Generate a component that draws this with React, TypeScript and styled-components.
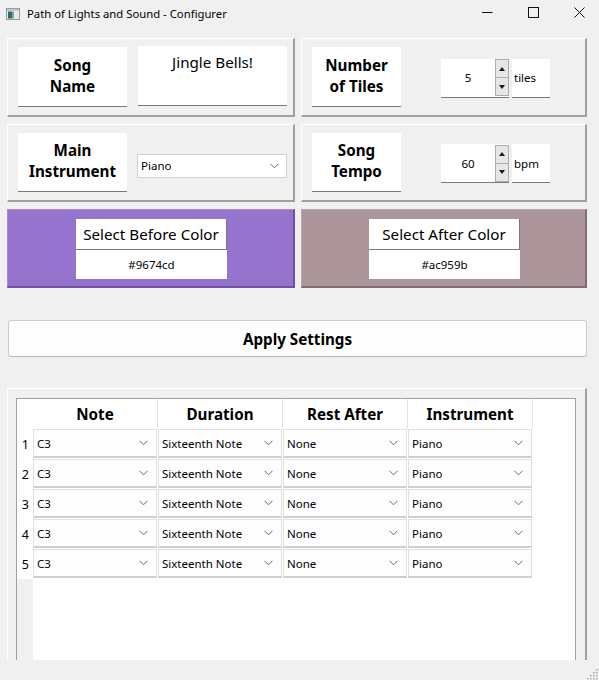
import React from 'react';
import styled, { createGlobalStyle } from 'styled-components';

const GlobalStyle = createGlobalStyle`
  html, body {
    margin: 0;
    padding: 0;
    background: #f0f0f0;
  }
  body {
    font-family: "Segoe UI", "Noto Sans", "Open Sans", sans-serif;
    color: #000;
  }
`;

const Window = styled.div`
  width: 599px;
  height: 680px;
  display: flex;
  flex-direction: column;
  overflow: hidden;
  background: #f0f0f0;
`;

const TitleBar = styled.div`
  height: 28px;
  flex-shrink: 0;
  display: flex;
  align-items: center;
  padding-left: 6px;
  font-size: 11.3px;
`;

const TitleText = styled.span`
  margin-left: 7px;
  flex: 1;
  margin-top: -2px;
`;

const WindowButtons = styled.div`
  display: flex;
  margin-right: -3px;
  height: 28px;
`;

const WindowButton = styled.div`
  width: 46px;
  display: flex;
  align-items: center;
  justify-content: center;
  margin-top: -4px;
`;

const Content = styled.div`
  flex: 1;
  min-height: 0;
  display: flex;
  flex-direction: column;
  padding: 10px 12px 0 7px;
  overflow: hidden;
`;

const SettingsGrid = styled.div`
  display: grid;
  grid-template-columns: 288px 286px;
  grid-template-rows: 79px 78px 79px;
  column-gap: 6px;
  row-gap: 7px;
`;

const Panel = styled.div<{ $bg?: string; $light?: string; $dark?: string }>`
  box-sizing: border-box;
  background: ${(p) => p.$bg ?? '#f0f0f0'};
  border-style: solid;
  border-width: 1px 2px 2px 1px;
  border-color: ${(p) => p.$light ?? '#ffffff'} ${(p) => p.$dark ?? '#a0a0a0'}
    ${(p) => p.$dark ?? '#a0a0a0'} ${(p) => p.$light ?? '#ffffff'};
  display: flex;
  align-items: center;
  padding-left: 10px;
`;

const LabelBox = styled.div<{ $w: number; $h?: number }>`
  box-sizing: border-box;
  width: ${(p) => p.$w}px;
  height: ${(p) => p.$h ?? 60}px;
  background: #fff;
  border-bottom: 1px solid #7a7a7a;
  display: flex;
  align-items: center;
  justify-content: center;
  text-align: center;
  font-weight: 700;
  font-size: 15.2px;
  line-height: 21px;
  padding-bottom: 2px;
`;

const NameField = styled.div`
  box-sizing: border-box;
  width: 149px;
  height: 60px;
  margin-left: 11px;
  margin-top: -2px;
  background: #fff;
  border-bottom: 1px solid #7a7a7a;
  text-align: center;
  font-size: 15.2px;
  padding-top: 6px;
`;

const SpinGroup = styled.div`
  display: flex;
  margin-left: 40px;
  gap: 3px;
  margin-top: 2px;
`;

const SpinBox = styled.div`
  box-sizing: border-box;
  width: 68px;
  height: 39px;
  background: #fff;
  border-bottom: 1px solid #7a7a7a;
  display: flex;
  align-items: center;
`;

const SpinValue = styled.span`
  flex: 1;
  text-align: center;
  font-size: 11.5px;
`;

const SpinArrows = styled.div`
  width: 14px;
  height: 37px;
  display: flex;
  flex-direction: column;
  border: 1px solid #adadad;
  box-sizing: border-box;
`;

const SpinArrow = styled.div<{ $down?: boolean }>`
  flex: 1;
  background: #e6e6e6;
  display: flex;
  align-items: center;
  justify-content: center;
  border-top: ${(p) => (p.$down ? '1px solid #adadad' : 'none')};
`;

const UnitBox = styled.div`
  box-sizing: border-box;
  width: 38px;
  height: 39px;
  background: #fff;
  border-bottom: 1px solid #7a7a7a;
  display: flex;
  align-items: center;
  padding-left: 2px;
  font-size: 11.5px;
`;

const ComboBox = styled.div<{ $w?: number }>`
  box-sizing: border-box;
  width: ${(p) => (p.$w ? `${p.$w}px` : '100%')};
  height: 24px;
  background: #fff;
  border: 1px solid #d0d0d0;
  display: flex;
  align-items: center;
  justify-content: space-between;
  padding: 0 7px 0 3px;
  font-size: 11.5px;
`;

const MainCombo = styled(ComboBox)`
  margin-left: 10px;
  margin-top: 6px;
`;

const ColorPanel = styled(Panel)`
  flex-direction: column;
  padding: 9px 0 0 2px;
  align-items: center;
  justify-content: flex-start;
`;

const ColorButton = styled.div`
  box-sizing: border-box;
  width: 151px;
  height: 31px;
  background: #fff;
  border-right: 1px solid #7a7a7a;
  border-bottom: 1px solid #7a7a7a;
  display: flex;
  align-items: center;
  justify-content: center;
  font-size: 15.2px;
`;

const HexField = styled.div`
  box-sizing: border-box;
  width: 151px;
  height: 29px;
  background: #fff;
  display: flex;
  align-items: center;
  justify-content: center;
  font-size: 11.5px;
`;

const ApplyButton = styled.button`
  all: unset;
  box-sizing: border-box;
  margin: 32px 0 0 1px;
  width: 579px;
  height: 37px;
  background: #fdfdfd;
  border: 1px solid #cccccc;
  border-bottom-color: #b8b8b8;
  border-radius: 3px;
  display: flex;
  align-items: center;
  justify-content: center;
  font-weight: 700;
  font-size: 15.2px;
`;

const TablePanel = styled.div`
  flex: 1;
  margin-top: 31px;
  min-height: 0;
  display: flex;
  border-style: solid;
  border-width: 1px 2px 0 1px;
  border-color: #fff #a0a0a0 #a0a0a0 #fff;
  padding: 9px 9px 0 8px;
`;

const TableFrame = styled.div`
  flex: 1;
  border: 1px solid #a0a0a0;
  border-bottom: none;
  background: #fff;
  display: grid;
  grid-template-columns: 16px repeat(4, 125px) 1fr;
  grid-template-rows: 30px repeat(5, 30px) 1fr;
`;

const HeaderCell = styled.div`
  border-right: 1px solid #e5e5e5;
  display: flex;
  align-items: center;
  justify-content: center;
  font-weight: 700;
  font-size: 15.2px;
`;

const RowNumber = styled.div`
  display: flex;
  align-items: center;
  justify-content: flex-end;
  padding-right: 4px;
  font-size: 12.5px;
  color: #000;
`;

const Cell = styled.div`
  padding: 0 1px 1px 0;
  box-sizing: border-box;
`;

const CellCombo = styled(ComboBox)`
  height: 29px;
  background: #fdfdfd;
  border-color: #e0e0e0;
  border-bottom: 2px solid #cfcfcf;
  padding: 0 8px 0 3px;
`;

const Filler = styled.div`
  grid-column: 1;
  background: #f0f0f0;
`;

const BottomStrip = styled.div`
  height: 20px;
  flex-shrink: 0;
  display: flex;
  justify-content: flex-end;
  align-items: flex-end;
`;

const Chevron = () => (
  <svg width="9" height="6" viewBox="0 0 9 6">
    <path d="M0.5 0.8 L4.5 4.8 L8.5 0.8" fill="none" stroke="#6a6a6a" strokeWidth="1" />
  </svg>
);

const Triangle = ({ down }: { down?: boolean }) => (
  <svg width="6" height="4" viewBox="0 0 6 4">
    <path d={down ? 'M0 0 L6 0 L3 4 Z' : 'M0 4 L6 4 L3 0 Z'} fill="#1a1a1a" />
  </svg>
);

const AppIcon = () => (
  <svg width="14" height="12" viewBox="0 0 14 12">
    <rect x="0.5" y="0.5" width="13" height="11" fill="#eaeaea" stroke="#9a9a9a" />
    <rect x="1" y="1" width="12" height="2" fill="#bfc8cf" />
    <rect x="2" y="3.5" width="4" height="7" fill="#2e6b6a" />
    <rect x="6" y="3.5" width="2" height="7" fill="#7fa7a8" />
  </svg>
);

const SizeGrip = () => (
  <svg width="12" height="12" viewBox="0 0 12 12">
    {[
      [9, 1],
      [6, 4],
      [9, 4],
      [3, 7],
      [6, 7],
      [9, 7],
      [0, 10],
      [3, 10],
      [6, 10],
      [9, 10],
    ].map(([x, y]) => (
      <rect key={`${x}-${y}`} x={x} y={y} width="1.5" height="1.5" fill="#a8a8a8" />
    ))}
  </svg>
);

function Spin({ value, unit }: { value: string; unit: string }) {
  return (
    <SpinGroup>
      <SpinBox>
        <SpinValue>{value}</SpinValue>
        <SpinArrows>
          <SpinArrow>
            <Triangle />
          </SpinArrow>
          <SpinArrow $down>
            <Triangle down />
          </SpinArrow>
        </SpinArrows>
      </SpinBox>
      <UnitBox>{unit}</UnitBox>
    </SpinGroup>
  );
}

const notes = [1, 2, 3, 4, 5].map((n) => ({
  n,
  note: 'C3',
  duration: 'Sixteenth Note',
  rest: 'None',
  instrument: 'Piano',
}));

export default function App() {
  return (
    <Window>
      <GlobalStyle />
      <TitleBar>
        <AppIcon />
        <TitleText>Path of Lights and Sound - Configurer</TitleText>
        <WindowButtons>
          <WindowButton>
            <svg width="11" height="11" viewBox="0 0 11 11">
              <path d="M0 5.5 H10.5" stroke="#111" strokeWidth="1" />
            </svg>
          </WindowButton>
          <WindowButton>
            <svg width="11" height="11" viewBox="0 0 11 11">
              <rect x="0.5" y="0.5" width="10" height="10" fill="none" stroke="#111" strokeWidth="1" />
            </svg>
          </WindowButton>
          <WindowButton>
            <svg width="11" height="11" viewBox="0 0 11 11">
              <path d="M0.5 0.5 L10.5 10.5 M10.5 0.5 L0.5 10.5" stroke="#111" strokeWidth="1" />
            </svg>
          </WindowButton>
        </WindowButtons>
      </TitleBar>

      <Content>
        <SettingsGrid>
          <Panel>
            <LabelBox $w={109}>
              Song
              <br />
              Name
            </LabelBox>
            <NameField>Jingle Bells!</NameField>
          </Panel>
          <Panel>
            <LabelBox $w={89}>
              Number
              <br />
              of Tiles
            </LabelBox>
            <Spin value="5" unit="tiles" />
          </Panel>
          <Panel>
            <LabelBox $w={109} $h={59}>
              Main
              <br />
              Instrument
            </LabelBox>
            <MainCombo $w={150}>
              <span>Piano</span>
              <Chevron />
            </MainCombo>
          </Panel>
          <Panel>
            <LabelBox $w={89} $h={59}>
              Song
              <br />
              Tempo
            </LabelBox>
            <Spin value="60" unit="bpm" />
          </Panel>
          <ColorPanel $bg="#9674cd" $light="#a98ad8" $dark="#6f53a0">
            <ColorButton>Select Before Color</ColorButton>
            <HexField>#9674cd</HexField>
          </ColorPanel>
          <ColorPanel $bg="#ac959b" $light="#bba8ad" $dark="#806c71">
            <ColorButton>Select After Color</ColorButton>
            <HexField>#ac959b</HexField>
          </ColorPanel>
        </SettingsGrid>

        <ApplyButton>Apply Settings</ApplyButton>

        <TablePanel>
          <TableFrame>
            <div />
            <HeaderCell>Note</HeaderCell>
            <HeaderCell>Duration</HeaderCell>
            <HeaderCell>Rest After</HeaderCell>
            <HeaderCell>Instrument</HeaderCell>
            <div />
            {notes.map((row) => (
              <React.Fragment key={row.n}>
                <RowNumber>{row.n}</RowNumber>
                {[row.note, row.duration, row.rest, row.instrument].map((v, i) => (
                  <Cell key={i}>
                    <CellCombo>
                      <span>{v}</span>
                      <Chevron />
                    </CellCombo>
                  </Cell>
                ))}
                <div />
              </React.Fragment>
            ))}
            <Filler />
          </TableFrame>
        </TablePanel>
      </Content>

      <BottomStrip>
        <SizeGrip />
      </BottomStrip>
    </Window>
  );
}
